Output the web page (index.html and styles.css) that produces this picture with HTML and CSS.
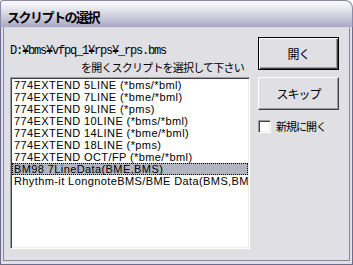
FILE: index.html
```html
<!DOCTYPE html>
<html lang="ja">
  <head>
    <meta charset="UTF-8" />
    <meta name="viewport" content="width=device-width, initial-scale=1.0" />
    <title>スクリプトの選択</title>
    <link rel="stylesheet" href="styles.css">
  </head>
  <body>
    <div class="window">
      <div class="titlebar">
        <span class="title">スクリプトの選択</span>
      </div>
      <div class="frame">
        <div class="client">
          <div class="left">
            <div class="path">D:¥bms¥vfpq_1¥rps¥_rps.bms</div>
            <div class="hint">を開くスクリプトを選択して下さい</div>
            <ul class="listbox">
              <li>774EXTEND 5LINE (*bms/*bml)</li>
              <li>774EXTEND 7LINE (*bme/*bml)</li>
              <li>774EXTEND 9LINE (*pms)</li>
              <li>774EXTEND 10LINE (*bms/*bml)</li>
              <li>774EXTEND 14LINE (*bme/*bml)</li>
              <li>774EXTEND 18LINE (*pms)</li>
              <li>774EXTEND OCT/FP (*bme/*bml)</li>
              <li class="selected">BM98 7LineData(BME,BMS)</li>
              <li>Rhythm-it LongnoteBMS/BME Data(BMS,BME)</li>
            </ul>
          </div>
          <div class="right">
            <button class="btn default">開く</button>
            <button class="btn">スキップ</button>
            <label class="check">
              <span class="box"></span>
              <span class="check-label">新規に開く</span>
            </label>
          </div>
        </div>
      </div>
    </div>
  </body>
</html>
```

FILE: styles.css
```css
body {
  margin: 0;
  padding: 0;
  background: #ffffff;
  font-family: "Liberation Sans", "Noto Sans CJK JP", sans-serif;
  font-size: 12px;
  color: #000;
}
.window {
  width: 353px;
  height: 265px;
  box-sizing: border-box;
  display: flex;
  flex-direction: column;
}
.titlebar {
  height: 27px;
  box-sizing: border-box;
  padding: 4px 0 0 6px;
  display: flex;
  align-items: center;
  border: 1px solid #8a8aa8;
  border-bottom: none;
  border-radius: 3px 8px 0 0;
  background: linear-gradient(#fcfcfe 0%, #e6e6ee 30%, #c4c4d6 70%, #a8a8c4 100%);
}
.title {
  font-family: "Noto Sans CJK JP", sans-serif;
  font-weight: bold;
  font-size: 13px;
  letter-spacing: -1.5px;
  color: #000;
}
.frame {
  flex: 1;
  border: 1px solid #6c6c8c;
  border-top: none;
  background: #e0dfe3;
  padding: 0 2px 3px 2px;
  display: flex;
}
.client {
  flex: 1;
  border: 1px solid #8585a5;
  border-top: 1px solid #d8d8e4;
  background: #e0dfe3;
  display: flex;
  padding: 9px 0 0 6px;
}
.left {
  width: 240px;
  padding-top: 7px;
  display: flex;
  flex-direction: column;
}
.path {
  font-family: "Liberation Mono", monospace;
  font-size: 12px;
  letter-spacing: -1.2px;
  line-height: 14px;
  height: 14px;
}
.hint {
  margin-top: 2px;
  padding-left: 71px;
  font-family: "Noto Sans CJK JP", sans-serif;
  font-size: 11px;
  letter-spacing: -0.8px;
  line-height: 14px;
  height: 14px;
  white-space: nowrap;
}
.listbox {
  list-style: none;
  margin: 3px 0 0 0;
  padding: 1px;
  height: 172px;
  box-sizing: border-box;
  background: #ffffff;
  border: 1px solid;
  border-color: #9d9da1 #ffffff #ffffff #9d9da1;
  box-shadow: inset 1px 1px #404040, inset -1px -1px #f1efe2;
  overflow: hidden;
}
.listbox li {
  height: 12px;
  line-height: 12px;
  padding-left: 2px;
  font-size: 11px;
  letter-spacing: 0.4px;
  white-space: nowrap;
  overflow: hidden;
  box-sizing: border-box;
}
.listbox li.selected {
  background: #b2b4bf;
  outline: 1px dotted #000;
  outline-offset: -1px;
}
.right {
  width: 81px;
  margin-left: 8px;
  display: flex;
  flex-direction: column;
}
.btn {
  width: 81px;
  height: 33px;
  margin: 0;
  padding: 0;
  font-family: "Noto Sans CJK JP", sans-serif;
  font-size: 12px;
  letter-spacing: -1px;
  color: #000;
  background: #e0dfe3;
  border: 1px solid;
  border-color: #ffffff #404040 #404040 #ffffff;
  box-shadow: inset -1px -1px #9d9da1;
  cursor: pointer;
}
.btn + .btn {
  margin-top: 7px;
}
.btn.default {
  border: 1px solid #000;
  box-shadow: inset 1px 1px #ffffff, inset -1px -1px #404040, inset -2px -2px #9d9da1;
}
.check {
  margin-top: 10px;
  display: flex;
  align-items: center;
  height: 13px;
}
.box {
  width: 13px;
  height: 13px;
  box-sizing: border-box;
  background: #ffffff;
  border: 1px solid;
  border-color: #9d9da1 #ffffff #ffffff #9d9da1;
  box-shadow: inset 1px 1px #404040, inset -1px -1px #f1efe2;
}
.check-label {
  margin-left: 5px;
  font-family: "Noto Sans CJK JP", sans-serif;
  font-size: 11px;
  letter-spacing: -1px;
  line-height: 13px;
}
```
